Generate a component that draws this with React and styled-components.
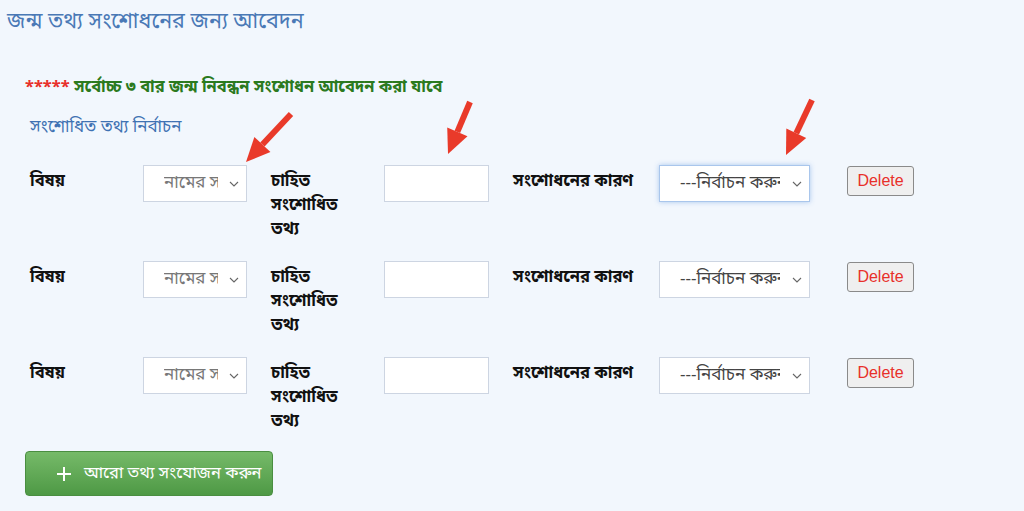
import React from "react"
import styled, { createGlobalStyle } from "styled-components"

const GlobalStyle = createGlobalStyle`
  html, body {
    margin: 0;
    padding: 0;
    background: #f2f7fd;
    font-family: "Noto Sans Bengali", "Noto Sans", "Liberation Sans", sans-serif;
  }
`

const Page = styled.div`
  position: relative;
  width: 1024px;
  height: 511px;
  overflow: hidden;
  padding: 0 7px;
  box-sizing: border-box;
`

const Title = styled.h2`
  margin: 0;
  padding-top: 9px;
  font-size: 21.5px;
  font-weight: normal;
  line-height: 28px;
  color: #4a79b6;
`

const Notice = styled.div`
  margin-top: 40px;
  padding-left: 18px;
  font-size: 16.5px;
  font-weight: bold;
  line-height: 22px;
  color: #2b7a1e;

  span {
    color: #e8302a;
  }
`

const Section = styled.div`
  margin-top: 18px;
  padding-left: 23px;
  font-size: 17px;
  line-height: 22px;
  color: #3f72b3;
`

const Rows = styled.div`
  margin-top: 26px;
  padding-left: 23px;
`

const Row = styled.div`
  display: grid;
  grid-template-columns: 113px 128px 113px 129px 146px 188px 67px;
  height: 96px;
  align-items: start;
`

const Label = styled.div`
  padding-top: 5px;
  width: ${p => p.$width || "auto"};
  font-size: 16.5px;
  font-weight: bold;
  line-height: 24px;
  color: #111;
`

const SelectBox = styled.div`
  display: flex;
  align-items: center;
  justify-content: space-between;
  width: ${p => p.$width}px;
  height: 37px;
  box-sizing: border-box;
  padding: 0 7px 0 ${p => p.$indent}px;
  background: #fff;
  border: 1px solid ${p => (p.$focused ? "#a9c6ec" : "#cdd5e2")};
  box-shadow: ${p => (p.$focused ? "0 0 5px rgba(80, 140, 220, 0.45)" : "none")};
  font-size: 17px;
  color: ${p => p.$color};
  white-space: nowrap;
  overflow: hidden;

  .value {
    overflow: hidden;
    width: ${p => p.$textWidth}px;
  }
`

const Input = styled.div`
  width: 105px;
  height: 37px;
  box-sizing: border-box;
  background: #fff;
  border: 1px solid #cdd5e2;
`

const DeleteButton = styled.button`
  margin-top: 1px;
  width: 67px;
  height: 30px;
  padding: 0;
  background: #efefef;
  border: 1px solid #8a8a8a;
  border-radius: 3px;
  font-family: "Liberation Sans", Arial, sans-serif;
  font-size: 16px;
  color: #e8302a;
`

const AddButton = styled.button`
  display: flex;
  align-items: center;
  gap: 12px;
  margin: -2px 0 0 18px;
  width: 248px;
  height: 45px;
  padding: 0 0 0 30px;
  box-sizing: border-box;
  background: linear-gradient(to bottom, #76ba69, #4e9945);
  border: 1px solid #4a8e41;
  border-radius: 4px;
  color: #fff;
  font-family: "Noto Sans Bengali", "Noto Sans", sans-serif;
  font-size: 16.5px;
`

const Arrows = styled.svg`
  position: absolute;
  left: 0;
  top: 0;
  pointer-events: none;
`

const Chevron = () => (
  <svg width="10" height="6" viewBox="0 0 10 6">
    <path d="M1 1l4 4 4-4" fill="none" stroke="#666" strokeWidth="1.1" />
  </svg>
)

const Arrow = ({ x1, y1, x2, y2 }) => {
  const a = Math.atan2(y2 - y1, x2 - x1)
  const len = 24
  const w = 11
  const bx = x2 - Math.cos(a) * len
  const by = y2 - Math.sin(a) * len
  const px = -Math.sin(a) * w
  const py = Math.cos(a) * w
  return (
    <g>
      <line x1={x1} y1={y1} x2={bx} y2={by} stroke="#e93a2a" strokeWidth="6" />
      <polygon
        points={`${x2},${y2} ${bx + px},${by + py} ${bx - px},${by - py}`}
        fill="#e93a2a"
      />
    </g>
  )
}

const rows = [0, 1, 2]

export default function App() {
  return (
    <>
      <GlobalStyle />
      <Page>
        <Title>জন্ম তথ্য সংশোধনের জন্য আবেদন</Title>
        <Notice>
          <span>*****</span> সর্বোচ্চ ৩ বার জন্ম নিবন্ধন সংশোধন আবেদন করা যাবে
        </Notice>
        <Section>সংশোধিত তথ্য নির্বাচন</Section>
        <Rows>
          {rows.map(i => (
            <Row key={i}>
              <Label>বিষয়</Label>
              <SelectBox $width={104} $indent={20} $textWidth={54} $color="#777">
                <span className="value">নামের সংশোধন</span>
                <Chevron />
              </SelectBox>
              <Label $width="82px">চাহিত সংশোধিত তথ্য</Label>
              <Input />
              <Label>সংশোধনের কারণ</Label>
              <SelectBox
                $width={151}
                $indent={20}
                $textWidth={100}
                $color="#444"
                $focused={i === 0}
              >
                <span className="value">---নির্বাচন করুন---</span>
                <Chevron />
              </SelectBox>
              <DeleteButton>Delete</DeleteButton>
            </Row>
          ))}
        </Rows>
        <AddButton>
          <svg width="16" height="16" viewBox="0 0 16 16">
            <path d="M8 1v14M1 8h14" stroke="#fff" strokeWidth="2" />
          </svg>
          আরো তথ্য সংযোজন করুন
        </AddButton>
        <Arrows width="1024" height="511">
          <Arrow x1={291} y1={114} x2={246} y2={162} />
          <Arrow x1={470} y1={102} x2={448} y2={154} />
          <Arrow x1={812} y1={100} x2={786} y2={155} />
        </Arrows>
      </Page>
    </>
  )
}
